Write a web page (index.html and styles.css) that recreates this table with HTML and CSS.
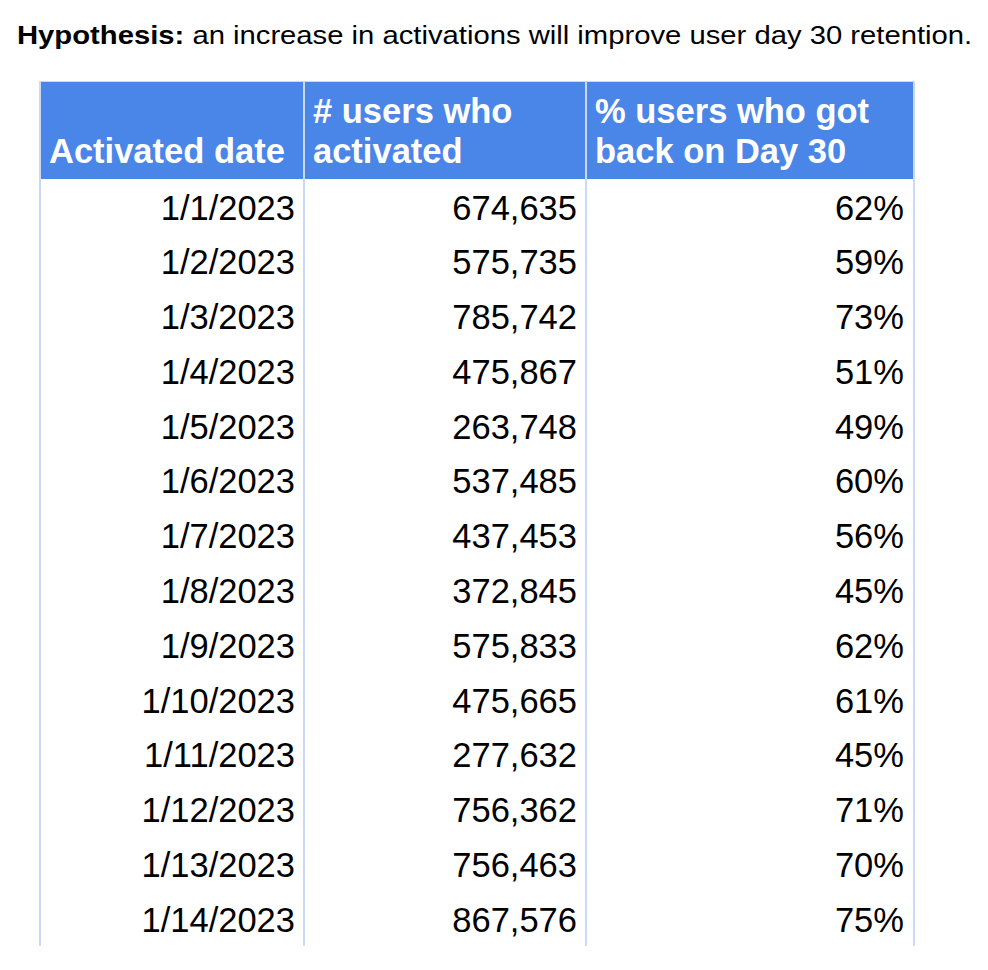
FILE: index.html
```html
<!DOCTYPE html>
<html>
<head>
<meta charset="utf-8">
<link rel="stylesheet" href="styles.css">
</head>
<body>
<div class="top"><p class="hypo"><b>Hypothesis:</b> an increase in activations will improve user day 30 retention.</p></div>
<table class="data">
  <thead>
    <tr>
      <th class="c1">Activated date</th>
      <th class="c2"># users who activated</th>
      <th class="c3">% users who got back on Day 30</th>
    </tr>
  </thead>
  <tbody>
    <tr><td>1/1/2023</td><td>674,635</td><td>62%</td></tr>
    <tr><td>1/2/2023</td><td>575,735</td><td>59%</td></tr>
    <tr><td>1/3/2023</td><td>785,742</td><td>73%</td></tr>
    <tr><td>1/4/2023</td><td>475,867</td><td>51%</td></tr>
    <tr><td>1/5/2023</td><td>263,748</td><td>49%</td></tr>
    <tr><td>1/6/2023</td><td>537,485</td><td>60%</td></tr>
    <tr><td>1/7/2023</td><td>437,453</td><td>56%</td></tr>
    <tr><td>1/8/2023</td><td>372,845</td><td>45%</td></tr>
    <tr><td>1/9/2023</td><td>575,833</td><td>62%</td></tr>
    <tr><td>1/10/2023</td><td>475,665</td><td>61%</td></tr>
    <tr><td>1/11/2023</td><td>277,632</td><td>45%</td></tr>
    <tr><td>1/12/2023</td><td>756,362</td><td>71%</td></tr>
    <tr><td>1/13/2023</td><td>756,463</td><td>70%</td></tr>
    <tr><td>1/14/2023</td><td>867,576</td><td>75%</td></tr>
  </tbody>
</table>
</body>
</html>
```
FILE: styles.css
```css
html, body {
  margin: 0;
  padding: 0;
  background: #ffffff;
}
body {
  font-family: "Liberation Sans", Arial, sans-serif;
  color: #000000;
}
.top {
  height: 62px;
  padding: 19px 0 0 17px;
  box-sizing: border-box;
}
.hypo {
  margin: 0;
  width: max-content;
  font-size: 25px;
  line-height: 33px;
  transform: scaleX(1.169);
  transform-origin: 0 0;
}
.data {
  margin: 19px 0 0 39px;
  border-collapse: separate;
  border-spacing: 0;
  table-layout: fixed;
  width: 876px;
  font-size: 34.5px;
}
.data th, .data td {
  box-sizing: border-box;
  border-left: 2px solid #c9daf8;
  padding: 0 8px;
}
.data th:last-child, .data td:last-child {
  border-right: 2px solid #c9daf8;
  padding-right: 9px;
}
.c1 { width: 264px; }
.c2 { width: 282px; }
.c3 { width: 330px; }
.data th {
  background: #4a86e8;
  color: #ffffff;
  font-weight: bold;
  text-align: left;
  vertical-align: bottom;
  line-height: 40px;
  height: 98px;
  padding-bottom: 8.3px;
  border-top: 1px solid #c9daf8;
}
.data td {
  text-align: right;
  vertical-align: bottom;
  line-height: 34.5px;
  height: 54.8px;
  padding-bottom: 8.8px;
}
```
